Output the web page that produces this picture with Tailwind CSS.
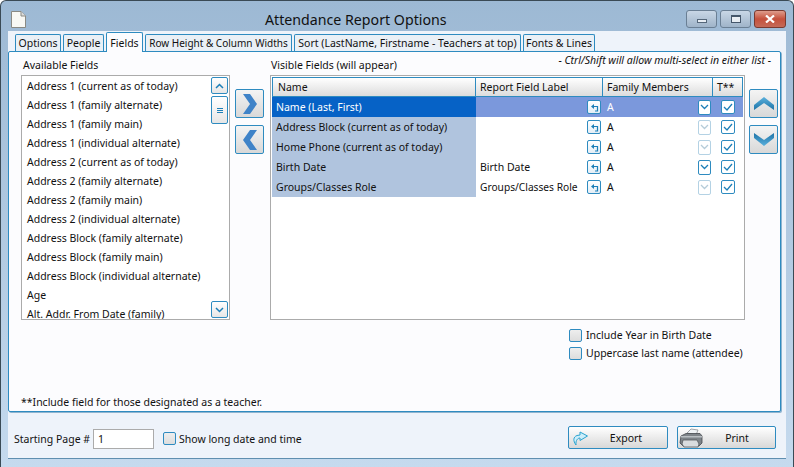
<!doctype html>
<html>
<head>
<meta charset="utf-8">
<script src="https://cdn.jsdelivr.net/npm/@tailwindcss/browser@4"></script>
</head>
<body class="overflow-hidden">
<div class="w-[794px] h-[467px] flex flex-col px-[7px] pb-[8px] rounded-t-[6px] border-t border-x border-[#3a4a55] bg-gradient-to-b from-[#9db9d4] to-[#c5daee] text-[#111] font-['Noto_Sans',sans-serif] text-[10.5px] leading-[14px]">

  <!-- title bar -->
  <div class="h-[30px] shrink-0 flex items-center">
    <svg class="ml-[3px] mt-[6px]" width="15" height="17" viewBox="0 0 15 17">
      <path d="M.5 .5H10L14.500 5V16.500H.5Z" fill="#f8f8f4" stroke="#8a8a84"/>
      <path d="M10 .5V5H14.500" fill="#ddd" stroke="#8a8a84"/>
    </svg>
    <div class="flex-1 ml-[239px] text-[14.2px] text-[#111] mt-[8px]">Attendance Report Options</div>
    <div class="flex gap-[3px] mt-[5px]">
      <div class="w-[31px] h-[18px] rounded-[3px] border border-[#6a7f94] bg-gradient-to-b from-[#c9d7e6] to-[#9fb4c9] flex items-center justify-center"><div class="w-[10px] h-[4px] mt-[4px] border border-[#55677a] bg-[#e8eef4]"></div></div>
      <div class="w-[31px] h-[18px] rounded-[3px] border border-[#6a7f94] bg-gradient-to-b from-[#c9d7e6] to-[#9fb4c9] flex items-center justify-center"><div class="w-[10px] h-[8px] border border-[#44566a] border-t-2 bg-white/70"></div></div>
      <div class="w-[32px] h-[18px] rounded-[3px] border border-[#7a3a30] bg-gradient-to-b from-[#dd9c8c] via-[#c5503c] to-[#c56a58] flex items-center justify-center">
        <svg width="10" height="8" viewBox="0 0 10 8"><path d="M1 .5L9 7.500M9 .5L1 7.500" stroke="#fff" stroke-width="2.200"/></svg>
      </div>
    </div>
  </div>

  <!-- client -->
  <div class="flex-1 flex flex-col bg-[#eef3fa] border-b border-[#5f8fb0]">
    <div class="h-[20px] shrink-0 flex items-end pl-[7px] gap-[2px] whitespace-nowrap">
      <div class="w-[46px] h-[17px] flex items-center justify-center border border-b-0 border-[#2e8bc0] rounded-t-[2px] bg-[#eaf0f6]">Options</div>
      <div class="w-[41px] h-[17px] flex items-center justify-center border border-b-0 border-[#2e8bc0] rounded-t-[2px] bg-[#eaf0f6]">People</div>
      <div class="w-[37px] h-[20px] flex items-center justify-center border border-b-0 border-[#2e8bc0] rounded-t-[2px] bg-[#fcfcfe] -mb-px relative z-10">Fields</div>
      <div class="w-[147px] h-[17px] flex items-center justify-center border border-b-0 border-[#2e8bc0] rounded-t-[2px] bg-[#eaf0f6] text-[10px]">Row Height &amp; Column Widths</div>
      <div class="w-[227px] h-[17px] flex items-center justify-center border border-b-0 border-[#2e8bc0] rounded-t-[2px] bg-[#eaf0f6]">Sort (LastName, Firstname - Teachers at top)</div>
      <div class="w-[72px] h-[17px] flex items-center justify-center border border-b-0 border-[#2e8bc0] rounded-t-[2px] bg-[#eaf0f6]">Fonts &amp; Lines</div>
    </div>

    <!-- panel -->
    <div class="w-[773px] h-[361px] shrink-0 flex flex-col bg-[#fcfcfe] border border-[#2e8bc0] rounded-[2px] shadow-[1px_1px_0_#8fb4cf]">
      <div class="h-[6px] pr-[9px] pt-[1px] text-right italic whitespace-nowrap">- Ctrl/Shift will allow multi-select in either list -</div>
      <div class="flex pl-[12px]">
        <div class="w-[209px]">
          <div class="pl-[2px] h-[16px]">Available Fields</div>
          <div class="h-[245px] mt-[1px] border border-[#ababab] bg-white flex overflow-hidden">
            <div class="flex-1 pl-[5px] overflow-hidden">
              <div class="h-[19px] flex items-center">Address 1 (current as of today)</div>
              <div class="h-[19px] flex items-center">Address 1 (family alternate)</div>
              <div class="h-[19px] flex items-center">Address 1 (family main)</div>
              <div class="h-[19px] flex items-center">Address 1 (individual alternate)</div>
              <div class="h-[19px] flex items-center">Address 2 (current as of today)</div>
              <div class="h-[19px] flex items-center">Address 2 (family alternate)</div>
              <div class="h-[19px] flex items-center">Address 2 (family main)</div>
              <div class="h-[19px] flex items-center">Address 2 (individual alternate)</div>
              <div class="h-[19px] flex items-center">Address Block (family alternate)</div>
              <div class="h-[19px] flex items-center">Address Block (family main)</div>
              <div class="h-[19px] flex items-center">Address Block (individual alternate)</div>
              <div class="h-[19px] flex items-center">Age</div>
              <div class="h-[19px] flex items-center">Alt. Addr. From Date (family)</div>
            </div>
            <div class="w-[17px] mr-[1px] py-[1px] flex flex-col gap-[2px]">
              <div class="h-[17px] border border-[#2e8bc0] rounded-[2px] bg-gradient-to-b from-white to-[#e6e6e6] flex items-center justify-center">
                <svg width="9" height="6" viewBox="0 0 9 6"><path d="M1 5L4.500 1.500L8 5" fill="none" stroke="#1c7fb8" stroke-width="1.500"/></svg>
              </div>
              <div class="h-[28px] border border-[#2e8bc0] rounded-[2px] bg-gradient-to-b from-white to-[#e6e6e6] flex items-center justify-center">
                <svg width="6" height="5" viewBox="0 0 6 5"><path d="M0 .5H6M0 2.500H6M0 4.500H6" stroke="#1c7fb8"/></svg>
              </div>
              <div class="flex-1"></div>
              <div class="h-[17px] border border-[#2e8bc0] rounded-[2px] bg-gradient-to-b from-white to-[#e6e6e6] flex items-center justify-center">
                <svg width="9" height="6" viewBox="0 0 9 6"><path d="M1 1L4.500 4.500L8 1" fill="none" stroke="#1c7fb8" stroke-width="1.500"/></svg>
              </div>
            </div>
          </div>
        </div>

        <div class="w-[40px] pl-[5px] pt-[31px] flex flex-col gap-[7px]">
          <div class="w-[29px] h-[29px] border border-[#2e8bc0] rounded-[2px] bg-gradient-to-b from-[#f4f4f4] to-[#d8d8d8] flex items-center justify-center">
            <svg width="16" height="20" viewBox="0 0 16 20"><path d="M1 0H8L15 10L8 20H1L8 10Z" fill="#3f83c8"/></svg>
          </div>
          <div class="w-[29px] h-[29px] border border-[#2e8bc0] rounded-[2px] bg-gradient-to-b from-[#f4f4f4] to-[#d8d8d8] flex items-center justify-center">
            <svg width="16" height="20" viewBox="0 0 16 20"><path d="M15 0H8L1 10L8 20H15L8 10Z" fill="#3f83c8"/></svg>
          </div>
        </div>

        <div class="w-[475px]">
          <div class="h-[16px] pl-[1px]">Visible Fields (will appear)</div>
          <div class="h-[245px] mt-[1px] border border-[#ababab] bg-white p-[1px]">
            <div class="h-[20px] flex border border-[#2e8bc0] bg-gradient-to-b from-white to-[#dcdcdc]">
              <div class="w-[203px] pl-[5px] flex items-center border-r border-[#2e8bc0]">Name</div>
              <div class="w-[127px] pl-[4px] flex items-center border-r border-[#2e8bc0]">Report Field Label</div>
              <div class="w-[110px] pl-[4px] flex items-center border-r border-[#2e8bc0]">Family Members</div>
              <div class="flex-1 pl-[4px] flex items-center">T**</div>
            </div>
            <!-- rows -->
            <div class="h-[20px] flex items-center text-white">
              <div class="w-[204px] h-full pl-[4px] flex items-center bg-[#0662c6]">Name (Last, First)</div>
              <div class="w-[127px] h-full flex items-center justify-end pr-[2px] bg-[#7b98dc]">
                <div class="w-[14px] h-[14px] border border-[#2e8bc0] rounded-[2px] bg-gradient-to-b from-white to-[#e4eef6] flex items-center justify-center"><svg width="9" height="9" viewBox="0 0 9 9"><path d="M1 3.500L4 1V6Z" fill="#1c7fb8"/><path d="M4 3.500H7.500V8H5" fill="none" stroke="#1c7fb8" stroke-width="1.200"/></svg></div>
              </div>
              <div class="w-[110px] h-full pl-[4px] pr-[2px] flex items-center justify-between bg-[#7b98dc]">A
                <div class="w-[13px] h-[15px] border border-[#2e8bc0] rounded-[2px] bg-white flex items-center justify-center"><svg width="9" height="6" viewBox="0 0 9 6"><path d="M1 1L4.500 4.500L8 1" fill="none" stroke="#1c7fb8" stroke-width="1.300"/></svg></div>
              </div>
              <div class="flex-1 h-full flex items-center justify-center bg-[#7b98dc]">
                <div class="w-[14px] h-[14px] border border-[#2e8bc0] rounded-[2px] bg-white flex items-center justify-center"><svg width="10" height="8" viewBox="0 0 10 8"><path d="M1 4L4 7L9 1" fill="none" stroke="#1c7fb8" stroke-width="1.300"/></svg></div>
              </div>
            </div>
            <div class="h-[20px] flex items-center">
              <div class="w-[204px] h-full pl-[4px] flex items-center bg-[#b0c4de]">Address Block (current as of today)</div>
              <div class="w-[127px] h-full flex items-center justify-end pr-[2px]">
                <div class="w-[14px] h-[14px] border border-[#2e8bc0] rounded-[2px] bg-gradient-to-b from-white to-[#e4eef6] flex items-center justify-center"><svg width="9" height="9" viewBox="0 0 9 9"><path d="M1 3.500L4 1V6Z" fill="#1c7fb8"/><path d="M4 3.500H7.500V8H5" fill="none" stroke="#1c7fb8" stroke-width="1.200"/></svg></div>
              </div>
              <div class="w-[110px] h-full pl-[4px] pr-[2px] flex items-center justify-between">A
                <div class="w-[13px] h-[15px] border border-[#b4d2e4] rounded-[2px] bg-white flex items-center justify-center"><svg width="9" height="6" viewBox="0 0 9 6"><path d="M1 1L4.500 4.500L8 1" fill="none" stroke="#b5ccd9" stroke-width="1.300"/></svg></div>
              </div>
              <div class="flex-1 h-full flex items-center justify-center">
                <div class="w-[14px] h-[14px] border border-[#2e8bc0] rounded-[2px] bg-white flex items-center justify-center"><svg width="10" height="8" viewBox="0 0 10 8"><path d="M1 4L4 7L9 1" fill="none" stroke="#1c7fb8" stroke-width="1.300"/></svg></div>
              </div>
            </div>
            <div class="h-[20px] flex items-center">
              <div class="w-[204px] h-full pl-[4px] flex items-center bg-[#b0c4de]">Home Phone (current as of today)</div>
              <div class="w-[127px] h-full flex items-center justify-end pr-[2px]">
                <div class="w-[14px] h-[14px] border border-[#2e8bc0] rounded-[2px] bg-gradient-to-b from-white to-[#e4eef6] flex items-center justify-center"><svg width="9" height="9" viewBox="0 0 9 9"><path d="M1 3.500L4 1V6Z" fill="#1c7fb8"/><path d="M4 3.500H7.500V8H5" fill="none" stroke="#1c7fb8" stroke-width="1.200"/></svg></div>
              </div>
              <div class="w-[110px] h-full pl-[4px] pr-[2px] flex items-center justify-between">A
                <div class="w-[13px] h-[15px] border border-[#b4d2e4] rounded-[2px] bg-white flex items-center justify-center"><svg width="9" height="6" viewBox="0 0 9 6"><path d="M1 1L4.500 4.500L8 1" fill="none" stroke="#b5ccd9" stroke-width="1.300"/></svg></div>
              </div>
              <div class="flex-1 h-full flex items-center justify-center">
                <div class="w-[14px] h-[14px] border border-[#2e8bc0] rounded-[2px] bg-white flex items-center justify-center"><svg width="10" height="8" viewBox="0 0 10 8"><path d="M1 4L4 7L9 1" fill="none" stroke="#1c7fb8" stroke-width="1.300"/></svg></div>
              </div>
            </div>
            <div class="h-[20px] flex items-center">
              <div class="w-[204px] h-full pl-[4px] flex items-center bg-[#b0c4de]">Birth Date</div>
              <div class="w-[127px] h-full pl-[4px] flex items-center justify-between pr-[2px]">Birth Date
                <div class="w-[14px] h-[14px] border border-[#2e8bc0] rounded-[2px] bg-gradient-to-b from-white to-[#e4eef6] flex items-center justify-center"><svg width="9" height="9" viewBox="0 0 9 9"><path d="M1 3.500L4 1V6Z" fill="#1c7fb8"/><path d="M4 3.500H7.500V8H5" fill="none" stroke="#1c7fb8" stroke-width="1.200"/></svg></div>
              </div>
              <div class="w-[110px] h-full pl-[4px] pr-[2px] flex items-center justify-between">A
                <div class="w-[13px] h-[15px] border border-[#2e8bc0] rounded-[2px] bg-white flex items-center justify-center"><svg width="9" height="6" viewBox="0 0 9 6"><path d="M1 1L4.500 4.500L8 1" fill="none" stroke="#1c7fb8" stroke-width="1.300"/></svg></div>
              </div>
              <div class="flex-1 h-full flex items-center justify-center">
                <div class="w-[14px] h-[14px] border border-[#2e8bc0] rounded-[2px] bg-white flex items-center justify-center"><svg width="10" height="8" viewBox="0 0 10 8"><path d="M1 4L4 7L9 1" fill="none" stroke="#1c7fb8" stroke-width="1.300"/></svg></div>
              </div>
            </div>
            <div class="h-[20px] flex items-center">
              <div class="w-[204px] h-full pl-[4px] flex items-center bg-[#b0c4de]">Groups/Classes Role</div>
              <div class="w-[127px] h-full pl-[4px] flex items-center justify-between pr-[2px] whitespace-nowrap"><span class="text-[10.2px]">Groups/Classes Role</span>
                <div class="w-[14px] h-[14px] border border-[#2e8bc0] rounded-[2px] bg-gradient-to-b from-white to-[#e4eef6] flex items-center justify-center"><svg width="9" height="9" viewBox="0 0 9 9"><path d="M1 3.500L4 1V6Z" fill="#1c7fb8"/><path d="M4 3.500H7.500V8H5" fill="none" stroke="#1c7fb8" stroke-width="1.200"/></svg></div>
              </div>
              <div class="w-[110px] h-full pl-[4px] pr-[2px] flex items-center justify-between">A
                <div class="w-[13px] h-[15px] border border-[#b4d2e4] rounded-[2px] bg-white flex items-center justify-center"><svg width="9" height="6" viewBox="0 0 9 6"><path d="M1 1L4.500 4.500L8 1" fill="none" stroke="#b5ccd9" stroke-width="1.300"/></svg></div>
              </div>
              <div class="flex-1 h-full flex items-center justify-center">
                <div class="w-[14px] h-[14px] border border-[#2e8bc0] rounded-[2px] bg-white flex items-center justify-center"><svg width="10" height="8" viewBox="0 0 10 8"><path d="M1 4L4 7L9 1" fill="none" stroke="#1c7fb8" stroke-width="1.300"/></svg></div>
              </div>
            </div>
          </div>
        </div>

        <div class="pl-[4px] pt-[31px] flex flex-col gap-[7px]">
          <div class="w-[29px] h-[29px] border border-[#2e8bc0] rounded-[2px] bg-gradient-to-b from-[#f4f4f4] to-[#d8d8d8] flex items-center justify-center">
            <svg width="20" height="13" viewBox="0 0 20 13"><defs><linearGradient id="u" x1="0" y1="0" x2="0" y2="1"><stop offset="0" stop-color="#5ab0dc"/><stop offset="1" stop-color="#1f74a8"/></linearGradient></defs><path d="M0 8L10 0L20 8V13L10 6L0 13Z" fill="url(#u)"/></svg>
          </div>
          <div class="w-[29px] h-[29px] border border-[#2e8bc0] rounded-[2px] bg-gradient-to-b from-[#f4f4f4] to-[#d8d8d8] flex items-center justify-center">
            <svg width="20" height="13" viewBox="0 0 20 13"><defs><linearGradient id="d" x1="0" y1="0" x2="0" y2="1"><stop offset="0" stop-color="#1f74a8"/><stop offset="1" stop-color="#5ab0dc"/></linearGradient></defs><path d="M0 0L10 7L20 0V5L10 13L0 5Z" fill="url(#d)"/></svg>
          </div>
        </div>
      </div>

      <div class="flex flex-col pl-[560px] pt-[6px]">
        <div class="h-[18px] flex items-center gap-[4px]"><span class="w-[13px] h-[13px] border border-[#2e8bc0] rounded-[2px] bg-gradient-to-b from-[#eee] to-[#ddd]"></span>Include Year in Birth Date</div>
        <div class="h-[18px] flex items-center gap-[4px]"><span class="w-[13px] h-[13px] border border-[#2e8bc0] rounded-[2px] bg-gradient-to-b from-[#eee] to-[#ddd]"></span>Uppercase last name (attendee)</div>
      </div>
      <div class="mt-auto pl-[12px] pb-[2px]">**Include field for those designated as a teacher.</div>
    </div>

    <!-- footer -->
    <div class="flex-1 flex items-center pl-[6px] pr-[10px] pt-[7px]">
      <span class="w-[79px] whitespace-nowrap">Starting Page #</span>
      <div class="w-[61px] h-[20px] border border-[#ababab] bg-white pl-[4px] flex items-center">1</div>
      <span class="ml-[9px] w-[13px] h-[13px] border border-[#2e8bc0] rounded-[2px] bg-gradient-to-b from-[#eee] to-[#ddd]"></span>
      <span class="ml-[3px]">Show long date and time</span>
      <div class="ml-auto -mt-[2px] w-[100px] h-[23px] border border-[#2e8bc0] rounded-[2px] bg-gradient-to-b from-white to-[#d8d8d8] flex items-center">
        <svg class="ml-[3px]" width="17" height="17" viewBox="0 0 17 17"><path d="M4 16C1 12 1 8 5 6.500L8 6V3L15.500 7L8 11.500V9C6 9 3.500 11 4 16Z" fill="#cdeefa" stroke="#2aa3d0"/></svg>
        <span class="flex-1 text-center pr-[4px]">Export</span>
      </div>
      <div class="ml-[9px] -mt-[2px] w-[99px] h-[23px] border border-[#2e8bc0] rounded-[2px] bg-gradient-to-b from-white to-[#d8d8d8] flex items-center">
        <svg class="ml-[1px]" width="24" height="20" viewBox="0 0 24 20"><path d="M8 5L12 1L19 2L17 7Z" fill="#eef2f5" stroke="#8a8f94" stroke-width=".8"/><path d="M2 8L7 5.500H21L23 8V15L20 18H4L1 15Z" fill="#7d8388" stroke="#44484c" stroke-width=".8"/><path d="M4 12H18L20 16L19 19H5L3 16Z" fill="#d9dcde" stroke="#55595d" stroke-width=".8"/><path d="M2 8H23V9.500H2Z" fill="#b9bec2"/></svg>
        <span class="flex-1 text-center pr-[4px]">Print</span>
      </div>
    </div>
  </div>
</div>
</body>
</html>
